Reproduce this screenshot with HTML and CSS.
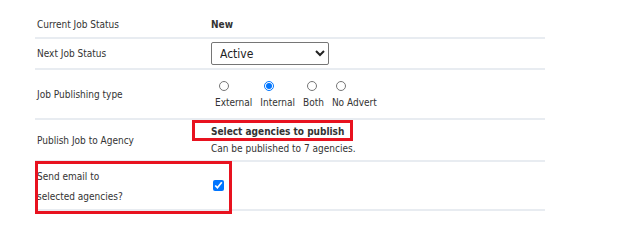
FILE: index.html
```html
<!DOCTYPE html>
<html lang="en">
<head>
    <meta charset="UTF-8">
    <title>Job Status</title>
    <link rel="stylesheet" href="styles.css">
</head>
<body>

    <div class="page">
        <table class="job-form">
            <tr class="row-current">
                <td class="label">Current Job Status</td>
                <td class="value"><b>New</b></td>
            </tr>
            <tr class="row-next">
                <td class="label">Next Job Status</td>
                <td class="value">
                    <select class="status-select">
                        <option>Active</option>
                        <option>On Hold</option>
                        <option>Closed</option>
                    </select>
                </td>
            </tr>
            <tr class="row-type">
                <td class="label">Job Publishing type</td>
                <td class="value">
                    <div class="radio-group">
                        <label class="radio-item"><input type="radio" name="ptype"><span>External</span></label>
                        <label class="radio-item"><input type="radio" name="ptype" checked><span>Internal</span></label>
                        <label class="radio-item"><input type="radio" name="ptype"><span>Both</span></label>
                        <label class="radio-item"><input type="radio" name="ptype"><span>No Advert</span></label>
                    </div>
                </td>
            </tr>
            <tr class="row-agency">
                <td class="label">Publish Job to Agency</td>
                <td class="value">
                    <div class="agency-link"><span>Select agencies to publish</span></div>
                    <div class="agency-note">Can be published to 7 agencies.</div>
                </td>
            </tr>
            <tr class="row-email">
                <td class="label email-label">Send email to<br>selected agencies?</td>
                <td class="value"><input type="checkbox" class="email-check" checked></td>
            </tr>
        </table>

        <div class="mark mark-agency"></div>
        <div class="mark mark-email"></div>
    </div>

</body>
</html>
```

FILE: styles.css
```css
body {
    margin: 0;
    min-height: 240px;
    background-color: #fff;
    font-family: "DejaVu Sans", Verdana, sans-serif;
    font-stretch: condensed;
    font-size: 10px;
    color: #333;
}
.page {
    position: relative;
    min-height: 230px;
    padding: 10px 0 0 35px;
}
.job-form {
    width: 510px;
    border-collapse: collapse;
}
.job-form td {
    border-bottom: 2px solid #e8ecf1;
    padding: 0;
    vertical-align: middle;
}
.label {
    width: 174px;
    padding-left: 2px !important;
}
.row-current td { height: 25px; padding-top: 2px; }
.row-next td { height: 29px; }
.row-type td { height: 48px; }
.row-agency td { height: 40px; }
.row-email td { height: 45px; padding-top: 2px; }
.status-select {
    width: 118px;
    height: 23px;
    font-family: "DejaVu Sans", Verdana, sans-serif;
    font-stretch: condensed;
    font-size: 12px;
    color: #222;
    border: 1px solid #767676;
    border-radius: 2px;
    background-color: #fff;
    padding-left: 4px;
}
.radio-group {
    display: flex;
    gap: 8px;
    margin-left: 4px;
}
.radio-item {
    display: flex;
    flex-direction: column;
    align-items: flex-start;
}
.radio-item input {
    width: 10px;
    height: 10px;
    margin: 0 0 6px 4px;
}
.agency-link span {
    font-weight: bold;
    padding-bottom: 1px;
    border-bottom: 1px dotted #e0bf55;
}
.agency-note {
    margin-top: 6px;
}
.email-label {
    line-height: 20px;
}
.email-check {
    width: 11px;
    height: 11px;
    margin: 0 0 0 2px;
}
.mark {
    position: absolute;
    border: 3px solid #e8121f;
}
.mark-agency {
    left: 192px;
    top: 120px;
    width: 155px;
    height: 15px;
}
.mark-email {
    left: 35px;
    top: 161px;
    width: 191px;
    height: 47px;
}
```
